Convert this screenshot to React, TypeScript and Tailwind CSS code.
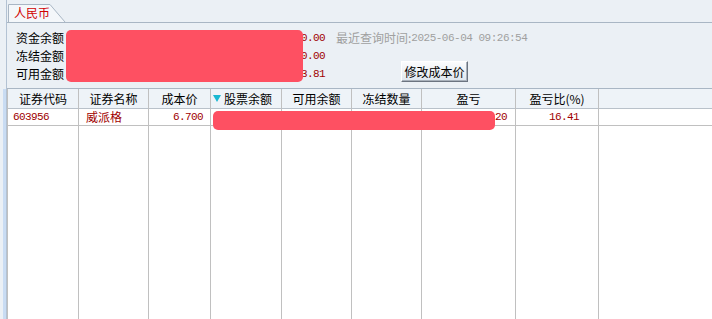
import React from 'react';

const cjk = { fontFamily: '"Noto Sans CJK SC", "Noto Sans", sans-serif' };
const mono = { fontFamily: '"Liberation Mono", "DejaVu Sans Mono", monospace' };

const columns = [
  { title: '证券代码', w: 'w-[71px]' },
  { title: '证券名称', w: 'w-[70px]' },
  { title: '成本价', w: 'w-[62px]' },
  { title: '股票余额', w: 'w-[71px]', sorted: true },
  { title: '可用余额', w: 'w-[70px]' },
  { title: '冻结数量', w: 'w-[70px]' },
  { title: '盈亏', w: 'w-[94px]' },
  { title: '盈亏比(%)', w: 'w-[83px]' },
];

function Cell({ index }: { index: number }) {
  const red = 'text-[#a00000]';
  switch (index) {
    case 0:
      return <span className={`pl-[5px] text-[11px] tracking-[-0.6px] ${red}`} style={mono}>603956</span>;
    case 1:
      return <span className={`pl-[7px] text-[12px] ${red}`} style={cjk}>威派格</span>;
    case 2:
      return <span className={`ml-auto pr-[7px] text-[11px] tracking-[-0.6px] ${red}`} style={mono}>6.700</span>;
    case 6:
      return <span className={`ml-auto pr-[8px] text-[11px] tracking-[-0.6px] ${red}`} style={mono}>20</span>;
    case 7:
      return <span className={`ml-auto pr-[19px] text-[11px] tracking-[-0.6px] ${red}`} style={mono}>16.41</span>;
    default:
      return null;
  }
}

export default function App() {
  return (
    <div className="w-[712px] h-[319px] bg-[#ebf0f5] flex overflow-hidden text-black" style={cjk}>
      <div className="w-[6px] flex flex-col">
        <div className="h-[89px]" />
        <div className="flex-1 ml-[3px] bg-[#c9dcf3]" />
      </div>

      <div className="flex-1 flex flex-col border-l border-[#b3c2d3]">
        {/* tab strip */}
        <div className="h-[23px] flex items-end border-b border-[#a9b6c4]">
          <div className="relative ml-[1px] h-[18px] w-[58px]">
            <svg className="absolute inset-0" width="58" height="18" viewBox="0 0 58 18">
              <path d="M0.5 18 V0.5 H42 L57 18" fill="#f4f7fa" stroke="#a9b6c4" />
            </svg>
            <span className="absolute left-[6px] top-[1px] text-[12px] leading-[16px] text-[#d00000]">人民币</span>
          </div>
        </div>

        {/* balance info */}
        <div className="relative h-[66px] border-b border-[#a9b6c4]">
          <div className="flex pt-[6px]">
            <div className="flex flex-col pl-[9px] text-[12px] leading-[18px]">
              <span>资金余额</span>
              <span>冻结金额</span>
              <span>可用金额</span>
            </div>
            <div className="w-[261px] flex flex-col items-end text-[11px] leading-[18px] tracking-[-0.6px] text-[#a00000]" style={mono}>
              <span>0.00</span>
              <span>0.00</span>
              <span>3.81</span>
            </div>
            <div className="flex flex-col pl-[11px]">
              <div className="flex items-center h-[18px] text-[#a0a0a0]">
                <span className="text-[12px]">最近查询时间:</span>
                <span className="text-[11px] tracking-[-0.5px]" style={mono}>2025-06-04 09:26:54</span>
              </div>
              <div className="h-[18px]" />
              <button className="mt-[-4px] ml-[65px] w-[67px] h-[21px] text-[12px] leading-[18px] bg-gradient-to-b from-[#fbfcfd] to-[#dfe6ee] border border-t-[#ffffff] border-l-[#ffffff] border-r-[#6c7480] border-b-[#6c7480] shadow-[inset_-1px_-1px_0_#a9b1bb]">
                修改成本价
              </button>
            </div>
          </div>
          <div className="absolute left-[59px] top-[7px] w-[237px] h-[52px] rounded-[5px] bg-[#fe5062]" />
        </div>

        {/* holdings table */}
        <div className="relative flex-1 flex bg-white border-l border-[#c0c0c0]">
          {columns.map((c, i) => (
            <div key={c.title} className={`${c.w} flex flex-col border-r border-[#c0c0c0]`}>
              <div
                className={`h-[20px] flex items-center bg-[#eef3f8] border-b border-[#b9c1ca] text-[12px] ${
                  c.sorted ? 'justify-start pl-[2px]' : 'justify-center'
                }`}
              >
                {c.sorted && (
                  <svg className="mr-[3px]" width="8" height="7" viewBox="0 0 8 7">
                    <path d="M0 0 H8 L4 7 Z" fill="#19b8d2" />
                  </svg>
                )}
                <span>{c.title}</span>
              </div>
              <div className="h-[17px] flex items-center border-b border-[#c0c0c0] leading-[16px]">
                <Cell index={i} />
              </div>
              <div className="flex-1" />
            </div>
          ))}
          <div className="flex-1 flex flex-col">
            <div className="h-[20px] bg-[#eef3f8] border-b border-[#b9c1ca]" />
            <div className="h-[17px] border-b border-[#c0c0c0]" />
          </div>
          <div className="absolute left-[205px] top-[22px] w-[282px] h-[19px] rounded-[5px] bg-[#fe5062]" />
        </div>
      </div>
    </div>
  );
}
